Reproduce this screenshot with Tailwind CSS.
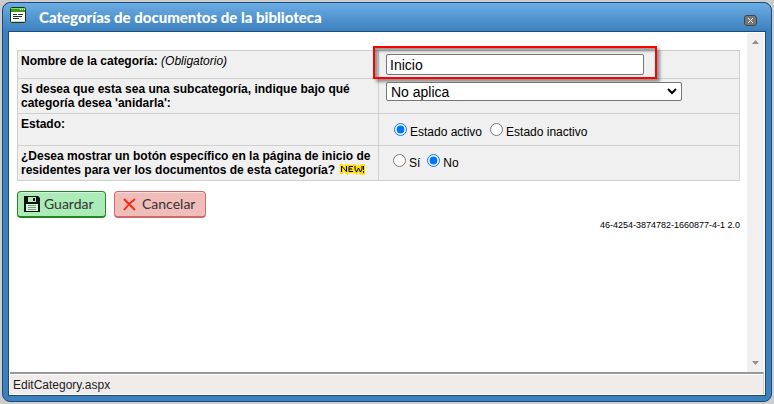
<!DOCTYPE html>
<html lang="es">
<head>
    <meta charset="UTF-8">
    <meta name="viewport" content="width=device-width, initial-scale=1.0">
    <title>Categorías de documentos de la biblioteca</title>
    <script src="https://cdn.jsdelivr.net/npm/@tailwindcss/browser@4"></script>
</head>
<body class="bg-[#cdcdcd] font-['Liberation_Sans',Arial,sans-serif] text-xs text-black">
    <div class="flex h-screen p-0.5">
        <div class="flex flex-1 flex-col rounded-lg border border-[#1d4a76] bg-[#3c80be]">

            <!-- Title bar -->
            <header class="flex h-7 items-center justify-between rounded-t-lg bg-linear-to-b from-[#6cade4] to-[#3c80be] pr-3.5 pl-1.5">
                <div class="flex items-center gap-3">
                    <svg class="mb-1 size-[18px]" viewBox="0 0 18 18" aria-hidden="true">
                        <rect x="1.5" y="1.5" width="15" height="15" rx="1" fill="#fff" stroke="#123d12"/>
                        <path d="M2 2h14v4H2z" fill="#3e9a22"/>
                        <path d="M2 2h14v1H2z" fill="#8fd25e"/>
                        <path d="M11 3h1v1h-1zM13 3h1v1h-1zM15 3h1v1h-1z" fill="#e9ffe0"/>
                        <path d="M4 8.5h4M9 8.5h5M4 10.5h9M4 12.5h6" stroke="#1c3a1c"/>
                        <path d="M2 15.5h14" stroke="#c9d8b4"/>
                    </svg>
                    <h1 class="font-['Lato',sans-serif] text-[15px] leading-5 font-black text-white">Categorías de documentos de la biblioteca</h1>
                </div>
                <button type="button" aria-label="Cerrar" class="mt-1.5 flex h-[11px] w-[13px] items-center justify-center rounded-[3px] border border-[#444] bg-[#777]">
                    <svg class="size-[7px]" viewBox="0 0 7 7" aria-hidden="true"><path d="M1 1l5 5M6 1L1 6" stroke="#fff"/></svg>
                </button>
            </header>

            <div class="mx-[5px] mb-[5px] flex min-h-0 flex-1 flex-col border border-[#1d4a76] bg-white">
                <div class="flex min-h-0 flex-1 pt-px">
                    <main class="flex-1 pt-[17px] pr-[7px] pl-2">
                        <form>
                            <table class="w-full border-collapse bg-[#f0f0f0] leading-[14px] [&_td]:border [&_td]:border-[#d0d0d0] [&_td]:align-top [&_th]:border [&_th]:border-[#d0d0d0] [&_th]:px-[3px] [&_th]:pt-[3px] [&_th]:text-left [&_th]:align-top">
                                <tbody>
                                    <tr class="h-7">
                                        <th class="w-1/2"><label for="nombre">Nombre de la categoría: <em class="font-normal">(Obligatorio)</em></label></th>
                                        <td class="relative w-1/2 pt-[3px] pl-[7px]">
                                            <input id="nombre" type="text" value="Inicio" class="block h-[21px] w-[258px] rounded-xs border border-[#767676] bg-white px-[3px] text-sm">
                                            <div class="pointer-events-none absolute -top-[5px] -left-[6px] h-[33px] w-[284px] border-2 border-[#f00] shadow-[3px_3px_3px_#0006,inset_3px_3px_3px_#0006]"></div>
                                        </td>
                                    </tr>
                                    <tr class="h-[35px]">
                                        <th><label for="padre">Si desea que esta sea una subcategoría, indique bajo qué categoría desea 'anidarla':</label></th>
                                        <td class="pt-[3px] pl-[7px]">
                                            <div class="relative w-[296px]">
                                                <select id="padre" class="block h-[19px] w-full appearance-none rounded-xs border border-[#767676] bg-white px-1 text-sm leading-4">
                                                    <option>No aplica</option>
                                                </select>
                                                <svg class="pointer-events-none absolute top-[6px] right-[5px] h-[7px] w-[10px]" viewBox="0 0 10 7" aria-hidden="true"><path d="M1 1l4 4 4-4" fill="none" stroke="#000" stroke-width="2"/></svg>
                                            </div>
                                        </td>
                                    </tr>
                                    <tr class="h-8">
                                        <th>Estado:</th>
                                        <td class="pt-[9px] pl-[15px]">
                                            <div class="flex items-start gap-2">
                                                <label class="flex gap-[3px]"><input type="radio" name="estado" checked class="size-[13px]"><span class="pt-0.5">Estado activo</span></label>
                                                <label class="flex gap-[3px]"><input type="radio" name="estado" class="size-[13px]"><span class="pt-0.5">Estado inactivo</span></label>
                                            </div>
                                        </td>
                                    </tr>
                                    <tr class="h-[35px]">
                                        <th>¿Desea mostrar un botón específico en la página de inicio de residentes para ver los documentos de esta categoría?
                                            <svg class="-mb-px ml-px inline h-[11px] w-[26px] align-baseline" viewBox="0 0 26 11" role="img" aria-label="NEW!">
                                                <g fill="none">
                                                    <path d="M2.500 8V2l5 5.500V2M14 2.500h-4v5h4M10 5h3M16 2v3l1.500 3 2-4 2 4L23 5V2M24.500 2v4M24.500 7v2" stroke="#ffdc00" stroke-width="3.5" stroke-linecap="square"/>
                                                    <path d="M2.500 8V2l5 5.500V2M14 2.500h-4v5h4M10 5h3M16 2v3l1.500 3 2-4 2 4L23 5V2M24.500 2v4M24.500 7v2" stroke="#000"/>
                                                </g>
                                            </svg>
                                        </th>
                                        <td class="pt-2 pl-[14px]">
                                            <div class="flex items-start gap-[7px]">
                                                <label class="flex gap-[3px]"><input type="radio" name="boton" class="size-[13px]"><span class="pt-0.5">Sí</span></label>
                                                <label class="flex gap-[3px]"><input type="radio" name="boton" checked class="size-[13px]"><span class="pt-0.5">No</span></label>
                                            </div>
                                        </td>
                                    </tr>
                                </tbody>
                            </table>

                            <div class="mt-2.5 flex gap-2 font-['Lato',sans-serif] text-sm text-[#333]">
                                <button type="submit" class="flex h-[27px] w-[89px] items-center gap-1 rounded border border-b-2 border-[#238823] bg-[#abebb7] pl-1.5 shadow-[inset_0_1px_#d5f5db]">
                                    <svg class="size-4" viewBox="0 0 16 16" aria-hidden="true">
                                        <path d="M0 0h14l2 2v14H0z" fill="#111"/>
                                        <path d="M4 1h8v5H4z" fill="#abebb7"/>
                                        <path d="M9 2h2v3H9z" fill="#111"/>
                                        <path d="M2 8h12v7H2z" fill="#d5f5db"/>
                                        <path d="M4 9.500h8M4 11.500h8M4 13.500h8" stroke="#7a9c80"/>
                                    </svg>
                                    Guardar
                                </button>
                                <button type="button" class="flex h-[27px] w-[92px] items-center gap-1.5 rounded border border-b-2 border-[#cf6a6a] bg-[#f0bdb9] pl-2 shadow-[inset_0_1px_#f8dcda]">
                                    <svg class="size-[13px]" viewBox="0 0 13 13" aria-hidden="true"><path d="M1 1l11 11M12 1C8 4 4 8 1 12" fill="none" stroke="#f52a12" stroke-width="2"/></svg>
                                    Cancelar
                                </button>
                            </div>
                        </form>
                        <p class="text-right text-[9px] leading-[14px]">46-4254-3874782-1660877-4-1 2.0</p>
                    </main>

                    <!-- Scrollbar -->
                    <div class="mr-px flex w-[17px] flex-col items-center justify-between bg-[#f0f0f0] pt-[7px] pb-[7px]">
                        <svg class="h-1 w-[7px]" viewBox="0 0 7 4" aria-hidden="true"><path d="M0 4l3.500-4L7 4z" fill="#909090"/></svg>
                        <svg class="h-1 w-[7px]" viewBox="0 0 7 4" aria-hidden="true"><path d="M0 0l3.500 4L7 0z" fill="#909090"/></svg>
                    </div>
                </div>

                <footer class="mx-px mb-px h-[22px] border-t-2 border-r border-t-[#999] border-r-[#ccc] bg-[#f0ecec] px-[3px] pt-[3px] leading-4 text-[#222] shadow-[inset_0_1px_#fff]">EditCategory.aspx</footer>
            </div>
        </div>
    </div>
</body>
</html>
